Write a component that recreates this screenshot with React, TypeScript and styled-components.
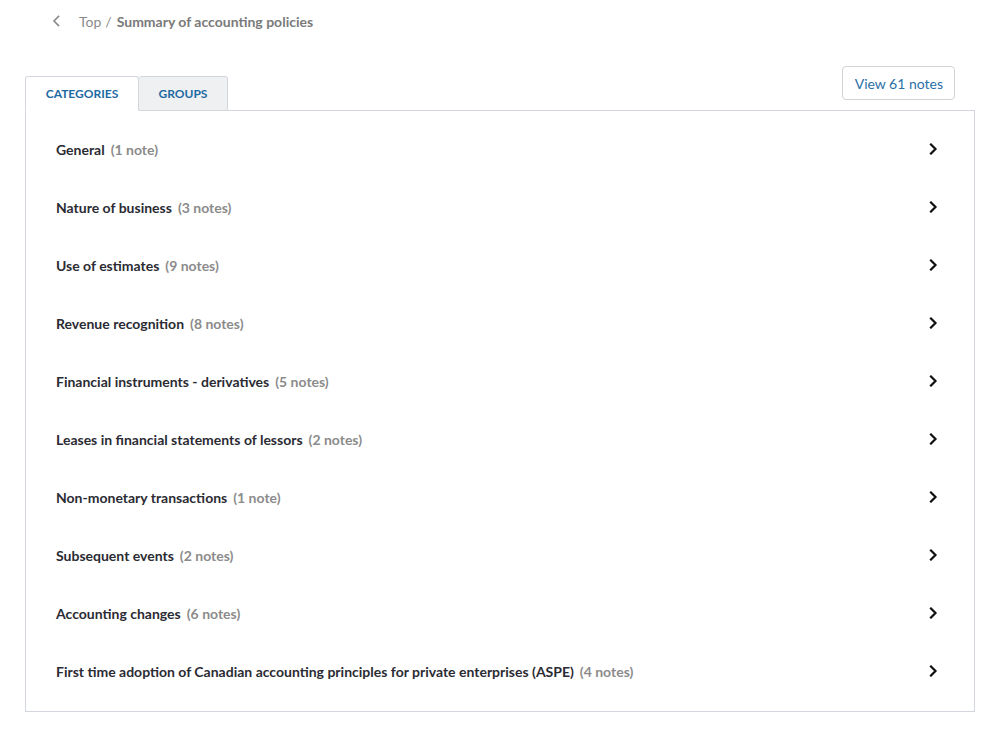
import styled, { createGlobalStyle } from 'styled-components';
import { useState } from 'react';

const GlobalStyle = createGlobalStyle`
  * {
    box-sizing: border-box;
  }

  body {
    margin: 0;
    background: #ffffff;
    font-family: Lato, 'Liberation Sans', sans-serif;
    color: #2b2b33;
  }
`;

interface CategoryItem {
  name: string;
  count: number;
}

const categories: CategoryItem[] = [
  { name: 'General', count: 1 },
  { name: 'Nature of business', count: 3 },
  { name: 'Use of estimates', count: 9 },
  { name: 'Revenue recognition', count: 8 },
  { name: 'Financial instruments - derivatives', count: 5 },
  { name: 'Leases in financial statements of lessors', count: 2 },
  { name: 'Non-monetary transactions', count: 1 },
  { name: 'Subsequent events', count: 2 },
  { name: 'Accounting changes', count: 6 },
  { name: 'First time adoption of Canadian accounting principles for private enterprises (ASPE)', count: 4 },
];

function Chevron({ direction, color, width }: { direction: 'left' | 'right'; color: string; width: number }) {
  const d = direction === 'right' ? 'M3 1.5 L7.5 6 L3 10.5' : 'M7.5 1.5 L3 6 L7.5 10.5';
  return (
    <svg width="11" height="12" viewBox="0 0 11 12" fill="none">
      <path d={d} stroke={color} strokeWidth={width} strokeLinecap="square" strokeLinejoin="miter" />
    </svg>
  );
}

export default function App() {
  const [tab, setTab] = useState<'categories' | 'groups'>('categories');

  return (
    <Page>
      <GlobalStyle />
      <Breadcrumb>
        <BackButton>
          <Chevron direction="left" color="#8a8a8a" width={1.6} />
        </BackButton>
        <CrumbLink>Top</CrumbLink>
        <CrumbSep>/</CrumbSep>
        <CrumbCurrent>Summary of accounting policies</CrumbCurrent>
      </Breadcrumb>

      <TabBar>
        <Tabs>
          <Tab $active={tab === 'categories'} $width={114} onClick={() => setTab('categories')}>
            Categories
          </Tab>
          <Tab $active={tab === 'groups'} $width={89} onClick={() => setTab('groups')}>
            Groups
          </Tab>
        </Tabs>
        <ViewButton>View 61 notes</ViewButton>
      </TabBar>

      <Panel>
        {categories.map((item) => (
          <Row key={item.name}>
            <RowLabel>
              {item.name}
              <RowCount>
                ({item.count} {item.count === 1 ? 'note' : 'notes'})
              </RowCount>
            </RowLabel>
            <Chevron direction="right" color="#111111" width={2.2} />
          </Row>
        ))}
      </Panel>
    </Page>
  );
}

const Page = styled.div`
  width: 996px;
  padding: 10px 21px 28px 25px;
`;

const Breadcrumb = styled.nav`
  display: flex;
  align-items: center;

  height: 22px;
  padding-left: 26px;

  font-size: 14px;
`;

const BackButton = styled.span`
  display: flex;
  align-items: center;

  margin-right: 17px;
`;

const CrumbLink = styled.span`
  color: #8a8a8a;
`;

const CrumbSep = styled.span`
  margin: 0 5px 0 4px;
  color: #8a8a8a;
`;

const CrumbCurrent = styled.span`
  font-weight: 700;
  color: #7a7a7a;
`;

const TabBar = styled.div`
  display: flex;
  justify-content: space-between;
  align-items: flex-end;

  margin-top: 34px;
`;

const Tabs = styled.div`
  display: flex;
`;

const Tab = styled.button<{ $active: boolean; $width: number }>`
  width: ${(p) => p.$width}px;
  height: 35px;
  margin-bottom: -1px;
  padding: 0;

  border: 1px solid #d3d6dc;
  border-bottom-color: ${(p) => (p.$active ? '#ffffff' : '#d3d6dc')};
  border-left-width: ${(p) => (p.$active ? '1px' : '0')};
  border-radius: 3px 3px 0 0;
  background: ${(p) => (p.$active ? '#ffffff' : '#eff0f2')};

  font-family: Lato, 'Liberation Sans', sans-serif;
  font-size: 12px;
  font-weight: 700;
  text-transform: uppercase;
  color: #1d6aa3;
  cursor: pointer;
  position: relative;
  z-index: 1;
`;

const ViewButton = styled.button`
  height: 34px;
  margin-right: 20px;
  margin-bottom: 10px;
  padding: 0 11px 0 12px;

  border: 1px solid #cfd3d8;
  border-radius: 4px;
  background: #ffffff;

  font-family: Lato, 'Liberation Sans', sans-serif;
  font-size: 14px;
  color: #2a6fa8;
  cursor: pointer;
`;

const Panel = styled.ul`
  margin: 0;
  padding: 9px 35px 11px 30px;
  list-style: none;

  border: 1px solid #d3d6dc;
`;

const Row = styled.li`
  display: flex;
  justify-content: space-between;
  align-items: center;

  height: 58px;
`;

const RowLabel = styled.span`
  font-size: 14px;
  font-weight: 700;
  color: #2b2b33;
`;

const RowCount = styled.span`
  margin-left: 6px;
  color: #8b8b8b;
`;
